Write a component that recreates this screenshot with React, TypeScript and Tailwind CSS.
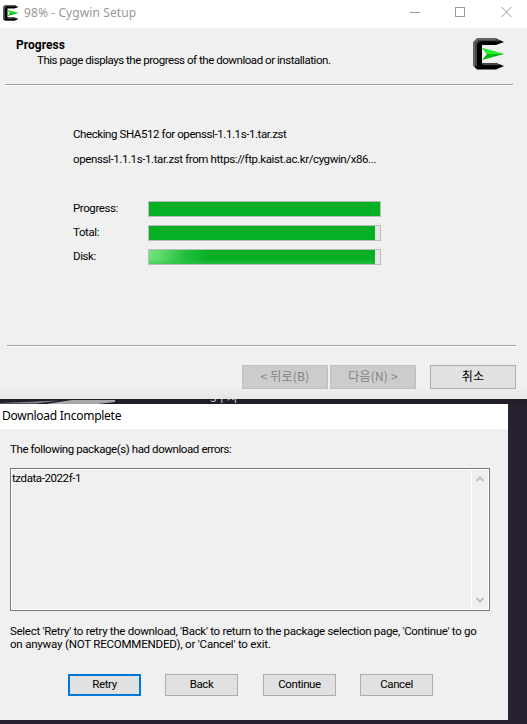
import type { ReactNode } from "react";

function CygwinLogo({ className }: { className: string }) {
  return (
    <svg viewBox="0 0 32 32" className={className}>
      <path d="M4 .5H23L31 4L23 7H9V25H23L31 28L23 31.500H4L.5 28V4Z" fill="#000" />
      <path d="M4 .5H23L29 3.200H7L4 6V28.500L.5 28V4Z" fill="#444" />
      <path d="M4 .5L.5 4V28L2 29.500V5L5 2H23L22 .5Z" fill="#666" />
      <path d="M9 25H23L29 27.300H10Z" fill="#444" />
      <path d="M9 10L31 16L9 22L14 16Z" fill="#00b814" />
      <path d="M9 10L31 16H14Z" fill="#28f030" />
    </svg>
  );
}

function Rule({ className }: { className: string }) {
  return <div className={`h-[2px] shrink-0 border-t border-[#a0a0a0] bg-white ${className}`} />;
}

function Bar({ label, children, last }: { label: string; children: ReactNode; last?: boolean }) {
  return (
    <div className={`flex h-4 items-center ${last ? "" : "mb-2"}`}>
      <span className="-mt-px w-[75px] shrink-0 leading-[15px]">{label}</span>
      <div className="h-4 w-[233px] border border-[#bcbcbc] bg-[#e6e6e6]">{children}</div>
    </div>
  );
}

function PushButton({ className, children }: { className: string; children: ReactNode }) {
  return <button className={`flex shrink-0 items-center justify-center ${className}`}>{children}</button>;
}

function SetupWindow() {
  return (
    <section className="flex h-[399px] w-[527px] flex-col bg-[#f0f0f0]">
      <header className="flex h-7 shrink-0 items-center bg-white pl-[3px] text-[#999]">
        <CygwinLogo className="-mt-[3px] h-4 w-4" />
        <h1 className="-mt-[2px] ml-[5px] font-['Noto_Sans',sans-serif] text-[12px] tracking-[0.1px]">98% - Cygwin Setup</h1>
        <svg viewBox="0 0 102 12" className="-mt-[4px] mr-[15px] ml-auto h-3 w-[102px]" fill="none" stroke="#999">
          <path d="M0 6.500H10" />
          <rect x="45.500" y="1.500" width="9" height="9" />
          <path d="M91.500 1L101.500 11M101.500 1L91.500 11" />
        </svg>
      </header>
      <div className="flex h-[56px] shrink-0 pl-4">
        <div className="pt-[10px]">
          <h2 className="text-[12px] leading-[15px] font-bold tracking-[0.02px]">Progress</h2>
          <p className="pl-[21px] leading-[15px] tracking-[-0.46px]">This page displays the progress of the download or installation.</p>
        </div>
        <CygwinLogo className="mt-[10px] mr-[22px] ml-auto h-8 w-8" />
      </div>
      <Rule className="mr-[14px] ml-[5px]" />
      <div className="flex-1 pt-[41px] pl-[73px]">
        <p className="h-[25px] leading-[15px]">Checking SHA512 for openssl-1.1.1s-1.tar.zst</p>
        <p className="mb-[34px] leading-[15px] tracking-[-0.39px]">openssl-1.1.1s-1.tar.zst from https://ftp.kaist.ac.kr/cygwin/x86...</p>
        <Bar label="Progress:"><div className="h-full w-full bg-[#06b025]" /></Bar>
        <Bar label="Total:"><div className="h-full w-[226px] bg-[#06b025]" /></Bar>
        <Bar label="Disk:" last>
          <div className="h-full w-[226px] bg-[linear-gradient(0deg,#34c150a0_0,transparent_5px),linear-gradient(100deg,#70e37b_0,#5cdb6c_12px,#20bc3b_38px,#06b025_60px)]" />
        </Bar>
      </div>
      <Rule className="mr-[11px] ml-[7px]" />
      <footer className="flex h-[52px] shrink-0 bg-[linear-gradient(0deg,#e6e6e6_0,#f0f0f0_12px)] pt-[18px] pl-[242px] font-['Noto_Sans_CJK_KR',sans-serif] text-[12px] leading-4 tracking-[0.2px]">
        <PushButton className="h-6 w-[86px] border border-[#bfbfbf] bg-[#ccc] pb-[3px] text-[#838383]">&lt; 뒤로(B)</PushButton>
        <PushButton className="ml-[2px] h-6 w-[86px] border border-[#bfbfbf] bg-[#ccc] pb-[3px] text-[#838383]">다음(N) &gt;</PushButton>
        <PushButton className="ml-[14px] h-6 w-[86px] border border-[#adadad] bg-[#e1e1e1] pb-[3px]">취소</PushButton>
      </footer>
    </section>
  );
}

function DesktopStrip() {
  return (
    <div className="relative h-[5px] shrink-0 overflow-hidden bg-[#231d29]">
      <svg viewBox="0 0 527 5" className="absolute inset-0 h-[5px] w-[527px]">
        <path d="M0 4L60 1.500L36 4.500H0Z" fill="#89848a" />
        <path d="M46 5L72 1H115V3L98 5Z" fill="#aaa6ac" />
      </svg>
      <span className="absolute -top-[10px] left-[210px] font-['Noto_Sans_CJK_KR',sans-serif] text-[12px] leading-4 text-[#ccc]">3주차</span>
    </div>
  );
}

function ErrorDialog() {
  return (
    <section className="flex h-[316px] w-[508px] flex-col bg-[#f0f0f0]">
      <header className="flex h-[25px] shrink-0 items-center bg-white pl-[2px]">
        <h1 className="-mt-[2px] font-['Noto_Sans',sans-serif] text-[12px] tracking-[-0.27px]">Download Incomplete</h1>
      </header>
      <p className="mt-[13px] ml-[10px] h-[26px] leading-[15px]">The following package(s) had download errors:</p>
      <div className="ml-[10px] flex h-[143px] w-[480px] shrink-0 border border-[#7a7a7a]">
        <div className="flex flex-1 border border-white">
          <p className="flex-1 pt-px leading-[15px]">tzdata-2022f-1</p>
          <div className="flex w-[17px] flex-col items-center justify-between border-l border-white py-[6px]">
            <svg viewBox="0 0 8 6" className="h-[6px] w-2" fill="none" stroke="#bfbfbf" strokeWidth="2"><path d="M.5 5L4 1.500L7.500 5" /></svg>
            <svg viewBox="0 0 8 6" className="h-[6px] w-2" fill="none" stroke="#bfbfbf" strokeWidth="2"><path d="M.5 1L4 4.500L7.500 1" /></svg>
          </div>
        </div>
      </div>
      <p className="mt-[14px] ml-[10px] h-[49px] leading-[13px] tracking-[-0.29px] whitespace-nowrap">
        Select 'Retry' to retry the download, 'Back' to return to the package selection page, 'Continue' to go<br />
        <span className="tracking-[-0.2px]">on anyway (NOT RECOMMENDED), or 'Cancel' to exit.</span>
      </p>
      <div className="flex gap-6 pl-[68px]">
        <PushButton className="h-[22px] w-[73px] border-2 border-[#0078d7] bg-[#e1e1e1]">Retry</PushButton>
        <PushButton className="h-[22px] w-[73px] border border-[#adadad] bg-[#e1e1e1]">Back</PushButton>
        <PushButton className="ml-px h-[22px] w-[73px] border border-[#adadad] bg-[#e1e1e1]">Continue</PushButton>
        <PushButton className="h-[22px] w-[73px] border border-[#adadad] bg-[#e1e1e1]">Cancel</PushButton>
      </div>
    </section>
  );
}

export default function App() {
  return (
    <main className="flex h-[724px] w-[527px] flex-col overflow-hidden bg-[#28212f] font-[Roboto,sans-serif] text-[11.5px] tracking-[-0.41px] text-black">
      <SetupWindow />
      <DesktopStrip />
      <ErrorDialog />
    </main>
  );
}
